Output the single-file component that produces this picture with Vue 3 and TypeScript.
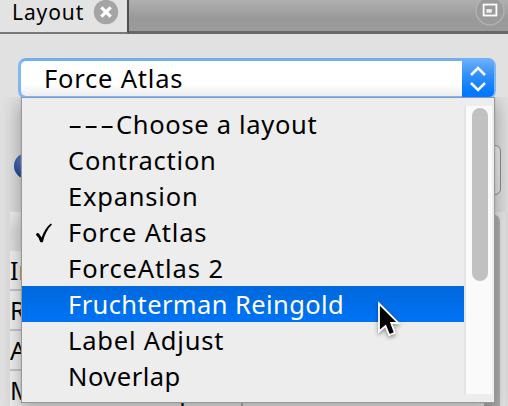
<script setup lang="ts">
interface Item { dashes?: string; label: string; spacing: number }
const items: Item[] = [
  { dashes: '---', label: 'Choose a layout', spacing: 0.68 },
  { label: 'Contraction', spacing: 0.78 },
  { label: 'Expansion', spacing: 0.78 },
  { label: 'Force Atlas', spacing: 0.8 },
  { label: 'ForceAtlas 2', spacing: 0.9 },
  { label: 'Fruchterman Reingold', spacing: 0.4 },
  { label: 'Label Adjust', spacing: 0.8 },
  { label: 'Noverlap', spacing: 0.5 },
]
const selected = 3
const hovered = 5
const properties: string[] = ['Inertia', 'Repulsion', 'Attraction', 'Maximum displ']
</script>

<template>
  <div class="window">
    <header class="tabbar">
      <div class="tab">
        <span class="tab-title">Layout</span>
        <svg class="close" width="26" height="26" viewBox="0 0 26 26">
          <circle cx="13" cy="13" r="12.2" fill="#a5a5a5" />
          <path d="M8.3 8.3 17.7 17.7M17.7 8.3 8.3 17.7" stroke="#fff" stroke-width="3.2" />
        </svg>
      </div>
      <svg class="maximize" width="34" height="34" viewBox="0 0 34 34">
        <circle cx="17" cy="12" r="15.3" fill="#9b9b9b" stroke="#b1b1b1" stroke-width="1.6" />
        <rect x="10" y="5" width="14" height="12" fill="none" stroke="#fff" stroke-width="2" />
        <rect x="13" y="10" width="6" height="4" fill="#eee" />
      </svg>
    </header>
    <main class="body">
      <div class="combo">
        <span class="combo-value">Force Atlas</span>
        <span class="combo-button">
          <svg width="34" height="40" viewBox="0 0 34 40">
            <path d="M10 17 17 10 24 17M10 25 17 32 24 25" fill="none" stroke="#fff" stroke-width="2.5" />
          </svg>
        </span>
      </div>
      <div class="toolbar">
        <span class="info"></span>
        <span class="run"></span>
      </div>
      <section class="sheet">
        <div class="sheet-head"></div>
        <div class="sheet-rows">
          <div v-for="name in properties" :key="name" class="sheet-row"><span>{{ name }}</span></div>
        </div>
        <div class="sheet-scroll"></div>
      </section>
    </main>
    <div class="menu">
      <ul class="items">
        <li v-for="(item, i) in items" :key="item.label" :class="{ hover: i === hovered }" :style="{ letterSpacing: item.spacing + 'px' }">
          <svg v-if="i === selected" class="check" width="20" height="22" viewBox="0 0 20 22">
            <path d="M1.8 12.5Q4 9.8 5.4 12.2L7.6 15.6Q11 6 16.8 1.6L18 2.5Q11.3 9 8.8 20.2L6.3 20.2Q4.6 15 1.8 12.5Z" fill="#000" />
          </svg>
          <span v-if="item.dashes" class="dashes">{{ item.dashes }}</span>
          <span>{{ item.label }}</span>
        </li>
      </ul>
      <div class="track"><div class="thumb"></div></div>
    </div>
    <svg class="cursor" width="30" height="44" viewBox="0 0 30 44">
      <path d="M3 3.5V31.5L9.5 26L13.2 35L18.8 32.8L15.2 23H22.5Z" fill="#000" stroke="#fff" stroke-width="1.8" />
    </svg>
  </div>
</template>

<style>
body { margin: 0; overflow: hidden; }
</style>
<style scoped>
.window { position: relative; width: 508px; height: 406px; overflow: hidden; background: #e1e1e1; font-family: "Noto Sans", sans-serif; color: #000; display: flex; flex-direction: column; }
.tabbar { box-sizing: border-box; height: 34px; display: flex; justify-content: space-between; border-bottom: 3px solid #686868; background: linear-gradient(#b0b0b0, #999 60%, #9b9b9b); }
.tab { box-sizing: border-box; width: 129px; height: 34px; display: flex; align-items: flex-start; background: #e3e3e3; border-right: 2px solid #4f4f4f; border-bottom: 2px solid #777; padding-left: 12px; }
.tab-title { width: 81px; line-height: 24px; font-size: 21px; letter-spacing: 0.9px; white-space: nowrap; }
.close { margin-top: -1px; }
.maximize { margin-right: 1px; height: 31px; }
.body { flex: 1; display: flex; flex-direction: column; }
.combo { box-sizing: border-box; margin: 24px 12px 0 18px; width: 478px; height: 41px; flex: none; display: flex; justify-content: space-between; border: 3px solid #83b7f2; border-top-color: #73aeef; border-radius: 8px; background: linear-gradient(#fff 65%, #ededed); }
.combo-value { padding-left: 23px; line-height: 35px; font-size: 25.5px; letter-spacing: 0.8px; }
.combo-button { width: 32px; height: 38px; margin: -2px -1px 0 0; border-radius: 0 5px 5px 0; background: linear-gradient(#6cb0fb, #2f8efb 45%, #0078ff 90%); }
.combo-button svg { display: block; margin: -1px 0 0 -1px; }
.toolbar { height: 50px; margin-top: 46px; display: flex; justify-content: space-between; padding: 0 7px 0 14px; }
.info { width: 26px; height: 26px; margin-top: 8px; border-radius: 50%; background: radial-gradient(circle at 50% 30%, #799adb, #2f55a8 60%, #17357d); }
.run { box-sizing: border-box; width: 100px; height: 50px; border: 1px solid #8f8f8f; border-radius: 6px; background: linear-gradient(#f2f2f2, #e6e6e6); }
.sheet { flex: none; height: 240px; margin: 17px 3px 0 10px; display: grid; grid-template-columns: 1fr 21px; grid-template-rows: 39px 1fr; background: #ebebeb; }
.sheet-head { background: linear-gradient(#f3f3f3, #e0e0e0 50%, #e3e3e3); }
.sheet-rows { grid-column: 1; background: #f4f4f4; }
.sheet-row { box-sizing: border-box; height: 40px; border-bottom: 2px solid #c9c9c9; font-size: 25px; line-height: 38px; white-space: nowrap; overflow: hidden; display: flex; }
.sheet-row span { box-sizing: border-box; width: 233px; border-right: 2px solid #b5b5b5; }
.sheet-row:last-child span { letter-spacing: 0.95px; }
.sheet-scroll { grid-column: 2; grid-row: 1 / 3; width: 16px; margin-top: 2px; border-radius: 8px; background: #b4b4b4; }
.menu { position: absolute; box-sizing: border-box; left: 22px; top: 97px; width: 472px; height: 305px; padding: 9px 2px 8px 0; display: flex; justify-content: space-between; background: #ededed; border-top: 1px solid #8099bd; box-shadow: 0 0 1px 1px #999, 0 8px 18px 3px rgba(0, 0, 0, .3); clip-path: inset(0 -30px -30px); }
.items { list-style: none; margin: -1px 0 0; padding: 0; width: 442px; height: 288px; }
.items li { position: relative; display: flex; height: 36px; line-height: 37px; padding-left: 46px; font-size: 25.5px; white-space: nowrap; }
.items li.hover { color: #fff; background: linear-gradient(#0068dc, #0073f5); }
.dashes { width: 48px; transform: scaleX(1.75); transform-origin: left; letter-spacing: 0.9px; }
.check { position: absolute; left: 12px; top: 8px; }
.track { box-sizing: border-box; width: 28px; height: 288px; margin-top: -1px; border-left: 2px solid #e5e5e5; background: #fafafa; padding: 2px 4px 0 6px; }
.thumb { height: 173px; width: 16px; border-radius: 8px; background: #c1c1c1; }
.cursor { position: absolute; left: 376px; top: 300px; filter: drop-shadow(0 2px 2px rgba(0, 0, 0, .4)); }
</style>
